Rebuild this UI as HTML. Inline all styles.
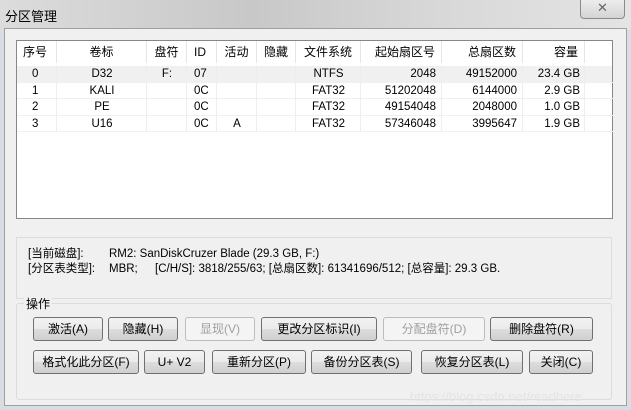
<!DOCTYPE html>
<html><head><meta charset="utf-8"><style>
*{box-sizing:border-box;margin:0;padding:0}
body{width:631px;height:410px;overflow:hidden;background:#d9dde3;font-family:"Liberation Sans","Noto Sans CJK SC",sans-serif;font-size:12px;color:#000;position:relative}
.title{position:absolute;left:0;top:0;width:631px;height:30px;background:linear-gradient(90deg,#dcdcdc 0%,#c8c8c8 40%,#d8d8d8 70%,#e4e4e4 100%)}
.title span{position:absolute;left:5px;top:6px;font-size:13px}
.close{position:absolute;left:580px;top:-1px;width:45px;height:20px;border:1px solid #8a8a8a;border-top:none;border-radius:0 0 4px 4px;background:linear-gradient(#eee,#d4d4d4);text-align:center;font-size:13px;color:#666;line-height:18px}
.panel{position:absolute;left:4px;top:28px;width:623px;height:378px;background:#f0f0f0;border:1px solid #a0a0a0}
.list{position:absolute;left:16px;top:40px;width:597px;height:179px;background:#fff;border:1px solid #828790}
.row{position:absolute;left:0;height:17px;width:595px}
.c{position:absolute;top:0;height:100%;line-height:17px;white-space:nowrap}
.hdr .c{border-right:1px solid #e5e5e5;height:22px;line-height:22px;font-size:12px}
.info{position:absolute;left:16px;top:237px;width:596px;height:62px;border:1px solid #dcdcdc;background:#f0f0f0;font-size:11.5px}
.info div{line-height:15px;height:15px}
.grp{position:absolute;left:16px;top:303px;width:596px;height:97px;border:1px solid #dcdcdc;border-radius:3px}
.btn{position:absolute;height:24px;border:1px solid #707070;border-radius:3px;background:linear-gradient(#f2f2f2 0%,#ebebeb 50%,#dddddd 51%,#cfcfcf 100%);text-align:center;line-height:22px;font-size:12px}
.dis{border-color:#bcbcbc;background:#f4f4f4;color:#a0a0a0}
.r{position:relative;height:16.5px;border-bottom:1px solid #f0f0f0}.r .c{line-height:16px}
</style></head><body>
<div class="title"><span>分区管理</span></div>
<div class="close">✕</div>
<div class="panel"></div>
<div class="list">
 <div class="row hdr" style="top:0;height:22px">
  <div class="c" style="left:0;width:40px;padding-left:6px">序号</div>
  <div class="c" style="left:40px;width:90px;text-align:center">卷标</div>
  <div class="c" style="left:130px;width:40px;text-align:center">盘符</div>
  <div class="c" style="left:170px;width:30px;padding-left:7px">ID</div>
  <div class="c" style="left:200px;width:40px;text-align:center">活动</div>
  <div class="c" style="left:240px;width:39px;text-align:center">隐藏</div>
  <div class="c" style="left:279px;width:65px;text-align:center">文件系统</div>
  <div class="c" style="left:344px;width:81px;text-align:right;padding-right:6px">起始扇区号</div>
  <div class="c" style="left:425px;width:81px;text-align:right;padding-right:6px">总扇区数</div>
  <div class="c" style="left:506px;width:62px;text-align:right;padding-right:6px">容量</div>
 </div>
 <div class="row" style="top:25px;background:#f0f0f0"></div>
</div>
<div class="info">
 <div style="position:absolute;left:11px;top:9px">[当前磁盘]:</div>
 <div style="position:absolute;left:92px;top:9px">RM2: SanDiskCruzer Blade (29.3 GB, F:)</div>
 <div style="position:absolute;left:11px;top:24px">[分区表类型]:</div>
 <div style="position:absolute;left:92px;top:24px">MBR;</div>
 <div style="position:absolute;left:138px;top:24px">[C/H/S]: 3818/255/63; [总扇区数]: 61341696/512; [总容量]: 29.3 GB.</div>
</div>
<div class="grp"></div>
<div style="position:absolute;left:24px;top:295px;background:#f0f0f0;padding:0 2px;font-size:12px">操作</div>
<div class="btn" style="left:33px;top:317px;width:70px">激活(A)</div>
<div class="btn" style="left:108px;top:317px;width:70px">隐藏(H)</div>
<div class="btn dis" style="left:185px;top:317px;width:70px">显现(V)</div>
<div class="btn" style="left:261px;top:317px;width:116px">更改分区标识(I)</div>
<div class="btn dis" style="left:383px;top:317px;width:102px">分配盘符(D)</div>
<div class="btn" style="left:490px;top:317px;width:103px">删除盘符(R)</div>
<div class="btn" style="left:33px;top:350px;width:106px">格式化此分区(F)</div>
<div class="btn" style="left:144px;top:350px;width:61px">U+ V2</div>
<div class="btn" style="left:212px;top:350px;width:94px">重新分区(P)</div>
<div class="btn" style="left:311px;top:350px;width:101px">备份分区表(S)</div>
<div class="btn" style="left:421px;top:350px;width:102px">恢复分区表(L)</div>
<div class="btn" style="left:529px;top:350px;width:64px">关闭(C)</div>
<div style="position:absolute;left:410px;top:389px;color:#e4e4e4;font-size:13px">https://blog.csdn.net/readhere</div>
<div style="position:absolute;left:17px;top:66px;width:596px;font-size:11.5px">
<div class="r"><div class="c" style="left:15px">0</div><div class="c" style="left:40px;width:90px;text-align:center">D32</div><div class="c" style="left:130px;width:40px;text-align:center">F:</div><div class="c" style="left:177px">07</div><div class="c" style="left:279px;width:65px;text-align:center">NTFS</div><div class="c" style="left:344px;width:75px;text-align:right">2048</div><div class="c" style="left:425px;width:75px;text-align:right">49152000</div><div class="c" style="left:506px;width:57px;text-align:right">23.4 GB</div></div>
<div class="r"><div class="c" style="left:15px">1</div><div class="c" style="left:40px;width:90px;text-align:center">KALI</div><div class="c" style="left:177px">0C</div><div class="c" style="left:279px;width:65px;text-align:center">FAT32</div><div class="c" style="left:344px;width:75px;text-align:right">51202048</div><div class="c" style="left:425px;width:75px;text-align:right">6144000</div><div class="c" style="left:506px;width:57px;text-align:right">2.9 GB</div></div>
<div class="r"><div class="c" style="left:15px">2</div><div class="c" style="left:40px;width:90px;text-align:center">PE</div><div class="c" style="left:177px">0C</div><div class="c" style="left:279px;width:65px;text-align:center">FAT32</div><div class="c" style="left:344px;width:75px;text-align:right">49154048</div><div class="c" style="left:425px;width:75px;text-align:right">2048000</div><div class="c" style="left:506px;width:57px;text-align:right">1.0 GB</div></div>
<div class="r"><div class="c" style="left:15px">3</div><div class="c" style="left:40px;width:90px;text-align:center">U16</div><div class="c" style="left:177px">0C</div><div class="c" style="left:200px;width:40px;text-align:center">A</div><div class="c" style="left:279px;width:65px;text-align:center">FAT32</div><div class="c" style="left:344px;width:75px;text-align:right">57346048</div><div class="c" style="left:425px;width:75px;text-align:right">3995647</div><div class="c" style="left:506px;width:57px;text-align:right">1.9 GB</div></div>
</div>
<div style="position:absolute;left:17px;top:65px;width:595px;height:67px;pointer-events:none">
<div style="position:absolute;left:39px;top:0;width:1px;height:67px;background:#eee"></div>
<div style="position:absolute;left:129px;top:0;width:1px;height:67px;background:#eee"></div>
<div style="position:absolute;left:169px;top:0;width:1px;height:67px;background:#eee"></div>
<div style="position:absolute;left:199px;top:0;width:1px;height:67px;background:#eee"></div>
<div style="position:absolute;left:239px;top:0;width:1px;height:67px;background:#eee"></div>
<div style="position:absolute;left:278px;top:0;width:1px;height:67px;background:#eee"></div>
<div style="position:absolute;left:343px;top:0;width:1px;height:67px;background:#eee"></div>
<div style="position:absolute;left:424px;top:0;width:1px;height:67px;background:#eee"></div>
<div style="position:absolute;left:505px;top:0;width:1px;height:67px;background:#eee"></div>
<div style="position:absolute;left:567px;top:0;width:1px;height:67px;background:#eee"></div>
</div>
</body></html>
